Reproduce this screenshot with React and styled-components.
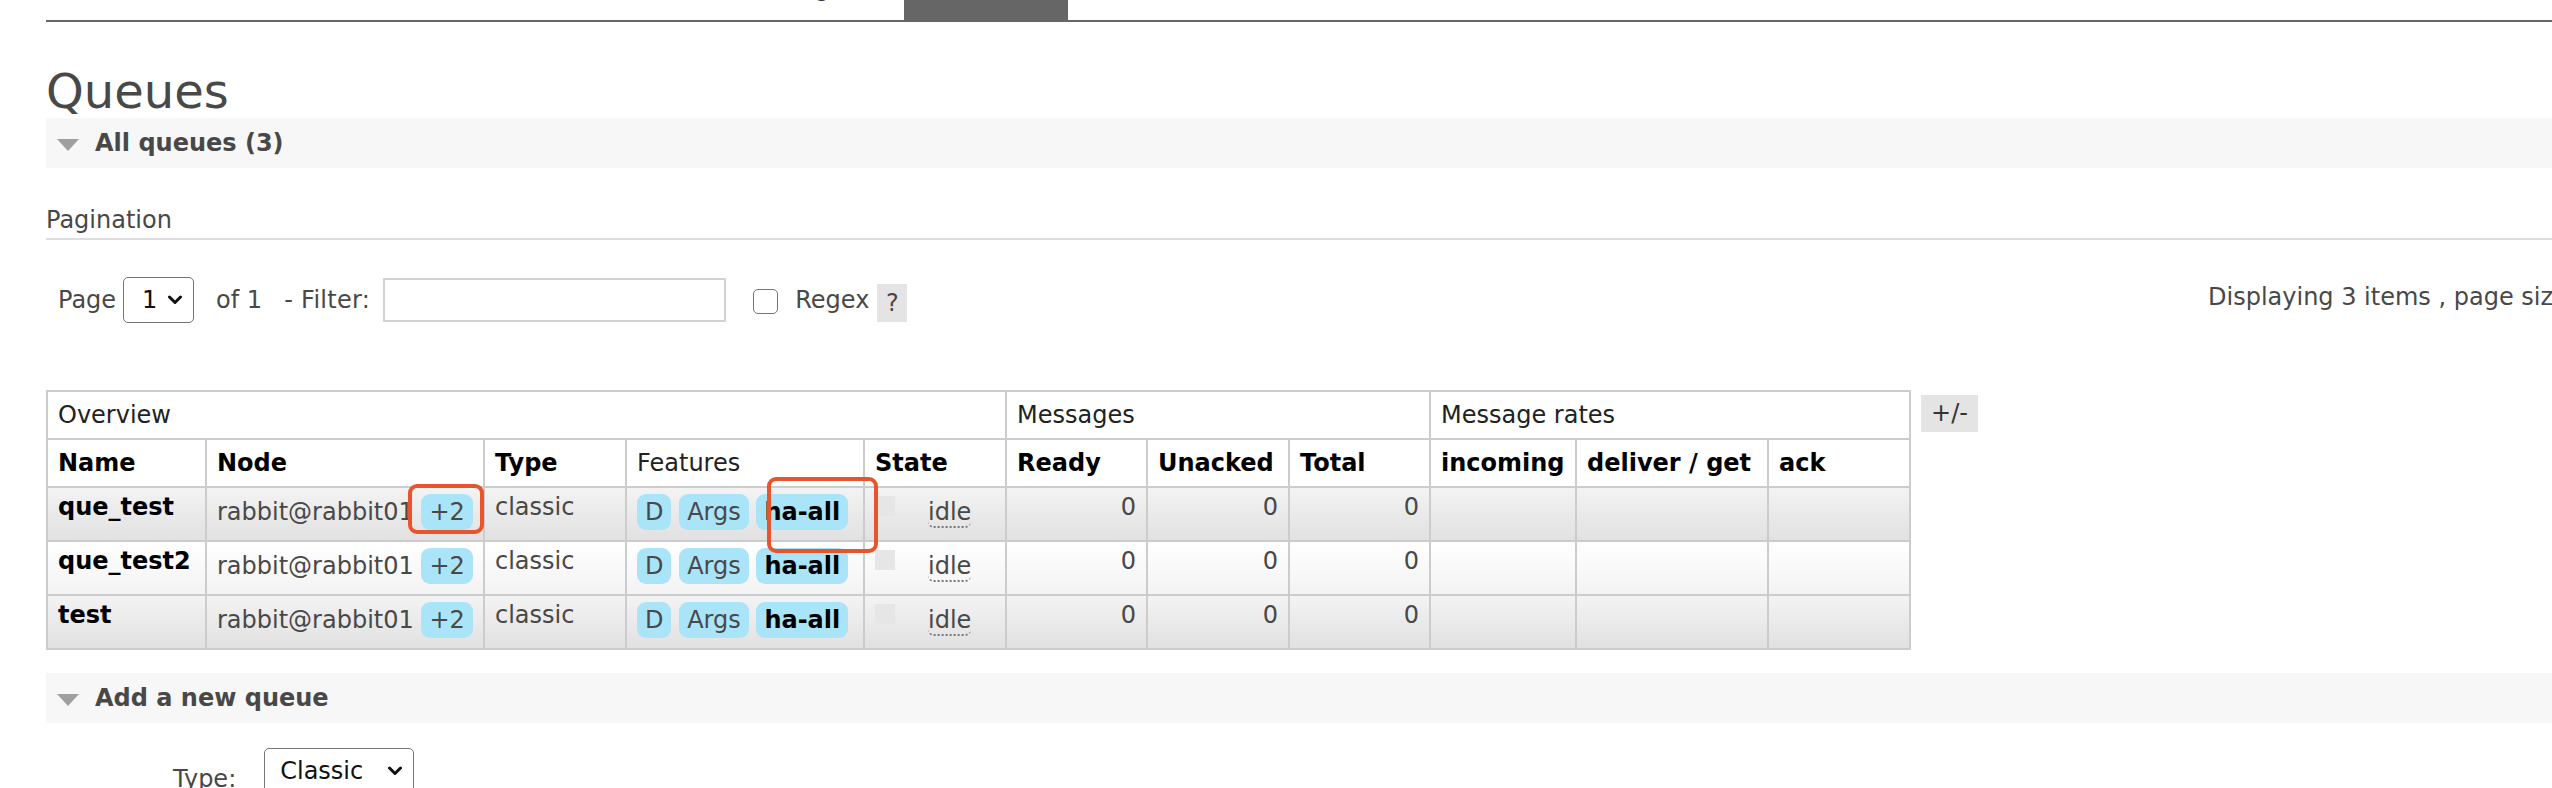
import React from 'react';
import styled, { createGlobalStyle } from 'styled-components';

const GlobalStyle = createGlobalStyle`
  html, body {
    margin: 0;
    padding: 0;
    background: #fff;
    overflow: hidden;
  }
  body {
    font-family: "DejaVu Sans", Verdana, sans-serif;
    font-size: 24px;
    color: #484848;
  }
`;

const tabs = ['Overview', 'Connections', 'Channels', 'Exchanges', 'Queues', 'Admin'];

const columns = [
  { label: 'Name', width: 159 },
  { label: 'Node', width: 278 },
  { label: 'Type', width: 142 },
  { label: 'Features', width: 238, normal: true },
  { label: 'State', width: 142 },
  { label: 'Ready', width: 141 },
  { label: 'Unacked', width: 142 },
  { label: 'Total', width: 141 },
  { label: 'incoming', width: 146 },
  { label: 'deliver / get', width: 192 },
  { label: 'ack', width: 142 },
];

const queues = [
  { name: 'que_test', node: 'rabbit@rabbit01', type: 'classic' },
  { name: 'que_test2', node: 'rabbit@rabbit01', type: 'classic' },
  { name: 'test', node: 'rabbit@rabbit01', type: 'classic' },
];

const Chevron = () => (
  <svg width="14" height="10" viewBox="0 0 14 10">
    <polyline points="1.5,2 7,7.5 12.5,2" fill="none" stroke="#111" strokeWidth="3" strokeLinecap="round" strokeLinejoin="round" />
  </svg>
);

const App = () => {
  return (
    <Page>
      <GlobalStyle />
      <Nav>
        {tabs.map((t) => (
          <Tab key={t} $active={t === 'Queues'}>{t}</Tab>
        ))}
      </Nav>

      <Title>Queues</Title>

      <SectionBar>
        <Arrow />
        All queues (3)
      </SectionBar>

      <SubHeading>Pagination</SubHeading>

      <PaginationRow>
        <LeftGroup>
          <Label>Page</Label>
          <SelectBox $w={71} $ml={7} $pl={18}>
            <span>1</span>
            <Chevron />
          </SelectBox>
          <Label $ml={22}>of 1</Label>
          <Label $ml={22} $spacing={0.3}>- Filter:</Label>
          <TextInput />
          <CheckBox />
          <Label $ml={17}>Regex</Label>
          <HelpBox>?</HelpBox>
        </LeftGroup>
        <Displaying>Displaying 3 items , page size up to:</Displaying>
      </PaginationRow>

      <TableRow>
        <TableWrap>
          <Grid>
            <colgroup>
              {columns.map((c) => (
                <col key={c.label} width={c.width} />
              ))}
            </colgroup>
            <thead>
              <tr>
                <GroupHead colSpan={5}>Overview</GroupHead>
                <GroupHead colSpan={3}>Messages</GroupHead>
                <GroupHead colSpan={3}>Message rates</GroupHead>
              </tr>
              <tr>
                {columns.map((c) => (
                  <ColHead key={c.label} $normal={c.normal}>{c.label}</ColHead>
                ))}
              </tr>
            </thead>
            <tbody>
              {queues.map((q, i) => (
                <Row key={q.name} $alt={i % 2 === 1}>
                  <Cell $strong>{q.name}</Cell>
                  <Cell>
                    {q.node} <Tag>+2</Tag>
                  </Cell>
                  <Cell>{q.type}</Cell>
                  <Cell>
                    <Tag>D</Tag> <Tag>Args</Tag> <Tag $bold>ha-all</Tag>
                  </Cell>
                  <Cell>
                    <StateMark />
                    <StateText>
                      <Abbr>idle</Abbr>
                    </StateText>
                  </Cell>
                  <Cell $right>0</Cell>
                  <Cell $right>0</Cell>
                  <Cell $right>0</Cell>
                  <Cell />
                  <Cell />
                  <Cell />
                </Row>
              ))}
            </tbody>
          </Grid>
          <Annotation $x={362} $y={94} $w={76} $h={50} />
          <Annotation $x={721} $y={87} $w={111} $h={76} />
        </TableWrap>
        <PlusMinus>+/-</PlusMinus>
      </TableRow>

      <SectionBar $mt={23}>
        <Arrow />
        Add a new queue
      </SectionBar>

      <FormRow>
        <FormLabel>Type:</FormLabel>
        <SelectBox $w={150} $ml={28} $pl={15}>
          <span>Classic</span>
          <Chevron />
        </SelectBox>
      </FormRow>
    </Page>
  );
};

const Page = styled.div`
  width: 2760px;
  padding-left: 46px;
`;

const Nav = styled.div`
  display: flex;
  gap: 19px;
  height: 20px;
  border-bottom: 2px solid #666;
`;

const Tab = styled.div`
  height: 20px;
  box-sizing: border-box;
  margin-left: ${(p) => (p.$active ? -8 : 0)}px;
  padding: 0 36px 18px;
  display: flex;
  align-items: flex-end;
  line-height: 28px;
  white-space: nowrap;
  background: ${(p) => (p.$active ? '#666' : 'transparent')};
  color: ${(p) => (p.$active ? '#fff' : '#333')};
`;

const Title = styled.h1`
  margin: 42px 0 0;
  font-size: 48px;
  font-weight: normal;
  line-height: 54px;
  color: #484848;
`;

const SectionBar = styled.div`
  display: flex;
  align-items: center;
  gap: 16px;
  height: 50px;
  margin-top: ${(p) => p.$mt || 0}px;
  padding-left: 11px;
  background: #f7f7f7;
  font-weight: bold;
  line-height: 28px;
  color: #484848;
`;

const Arrow = styled.span`
  width: 0;
  height: 0;
  margin-top: 4px;
  border-left: 11px solid transparent;
  border-right: 11px solid transparent;
  border-top: 12px solid #a0a0a0;
`;

const SubHeading = styled.div`
  margin-top: 38px;
  padding-bottom: 4px;
  line-height: 28px;
  border-bottom: 2px solid #ddd;
`;

const PaginationRow = styled.div`
  display: flex;
  align-items: center;
  height: 46px;
  margin-top: 37px;
  padding-left: 12px;
`;

const LeftGroup = styled.div`
  flex: none;
  width: 2150px;
  height: 46px;
  display: flex;
  align-items: center;
`;

const Label = styled.span`
  margin-left: ${(p) => p.$ml || 0}px;
  letter-spacing: ${(p) => p.$spacing || 0}px;
  line-height: 28px;
  white-space: nowrap;
`;

const SelectBox = styled.div`
  flex: none;
  box-sizing: border-box;
  width: ${(p) => p.$w}px;
  height: 46px;
  margin-left: ${(p) => p.$ml || 0}px;
  padding: 0 11px 0 ${(p) => p.$pl}px;
  display: flex;
  align-items: center;
  justify-content: space-between;
  border: 1.5px solid #767676;
  border-radius: 5px;
  background: #fff;
  color: #111;
  line-height: 28px;
`;

const TextInput = styled.div`
  flex: none;
  box-sizing: border-box;
  width: 343px;
  height: 44px;
  margin-left: 13px;
  border: 2px solid #d2d2d2;
  background: #fff;
`;

const CheckBox = styled.div`
  flex: none;
  box-sizing: border-box;
  width: 25px;
  height: 25px;
  margin: 2px 0 0 27px;
  border: 1.5px solid #767676;
  border-radius: 5px;
  background: #fff;
`;

const HelpBox = styled.span`
  flex: none;
  align-self: flex-end;
  width: 30px;
  height: 38px;
  margin: 0 0 1px 8px;
  display: flex;
  align-items: center;
  justify-content: center;
  background: #e4e4e4;
  line-height: 28px;
`;

const Displaying = styled.span`
  margin-bottom: 6px;
  line-height: 28px;
  white-space: nowrap;
`;

const TableRow = styled.div`
  display: flex;
  align-items: flex-start;
  margin-top: 67px;
`;

const TableWrap = styled.div`
  position: relative;
`;

const Grid = styled.table`
  border-collapse: collapse;
  table-layout: fixed;
  width: 1864px;

  th,
  td {
    border: 2px solid #ccc;
    text-align: left;
    vertical-align: top;
    white-space: nowrap;
    line-height: 26px;
  }
`;

const GroupHead = styled.th`
  padding: 10px;
  font-weight: normal;
  color: #222;
  background: #fff;
`;

const ColHead = styled.th`
  padding: 10px;
  font-weight: ${(p) => (p.$normal ? 'normal' : 'bold')};
  color: ${(p) => (p.$normal ? '#222' : '#000')};
  background: #fff;
`;

const Row = styled.tr`
  & > td {
    background: ${(p) =>
      p.$alt
        ? 'linear-gradient(#ffffff, #f3f3f3)'
        : 'linear-gradient(#f3f3f3, #e1e1e1)'};
  }
`;

const Cell = styled.td`
  padding: 6px 10px 10px;
  height: 36px;
  font-weight: ${(p) => (p.$strong ? 'bold' : 'normal')};
  color: ${(p) => (p.$strong ? '#000' : '#484848')};
  text-align: ${(p) => (p.$right ? 'right' : 'left')} !important;
`;

const Tag = styled.span`
  display: inline-block;
  padding: 5px 8px;
  line-height: 26px;
  border-radius: 9px;
  background: #aae4f8;
  font-weight: ${(p) => (p.$bold ? 'bold' : 'normal')};
  color: ${(p) => (p.$bold ? '#000' : '#484848')};
`;

const StateMark = styled.span`
  display: inline-block;
  width: 20px;
  height: 20px;
  vertical-align: 4px;
  background: #e6e6e6;
`;

const StateText = styled.span`
  display: inline-block;
  margin-left: 33px;
  padding: 5px 0;
  line-height: 26px;
`;

const Abbr = styled.span`
  border-bottom: 2px dotted #777;
  border-radius: 6px;
`;

const Annotation = styled.div`
  position: absolute;
  left: ${(p) => p.$x}px;
  top: ${(p) => p.$y}px;
  width: ${(p) => p.$w}px;
  height: ${(p) => p.$h}px;
  box-sizing: border-box;
  border: 4px solid #e8552d;
  border-radius: 9px;
  pointer-events: none;
`;

const PlusMinus = styled.span`
  flex: none;
  margin: 5px 0 0 10px;
  padding: 5px 10px;
  line-height: 27px;
  background: #e4e4e4;
  color: #333;
`;

const FormRow = styled.div`
  display: flex;
  align-items: flex-start;
  margin-top: 25px;
  padding-left: 127px;
`;

const FormLabel = styled.span`
  margin-top: 17px;
  line-height: 28px;
`;

export default App;
